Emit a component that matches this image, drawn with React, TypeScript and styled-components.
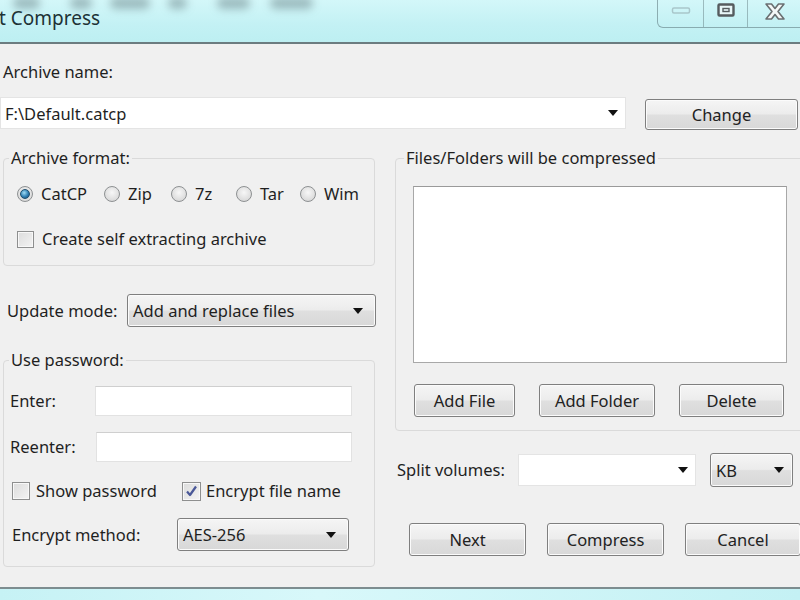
import styled, {createGlobalStyle} from 'styled-components';

const GlobalStyle = createGlobalStyle`
  html, body {
    margin: 0;
    padding: 0;
    background: #c9f3f6;
  }
  body {
    font-family: "Noto Sans", "Liberation Sans", sans-serif;
    font-size: 16.5px;
    color: #1f1f1f;
  }
`;

const Screen = styled.div`
  width: 800px;
  height: 600px;
  overflow: hidden;
  display: flex;
  flex-direction: column;
  background: linear-gradient(90deg, #c6f2f5, #d8f8fa 40%, #c4f1f4);
`;

const TitleBar = styled.div`
  height: 42px;
  flex: none;
  display: flex;
  justify-content: space-between;
  align-items: flex-start;
  background: linear-gradient(180deg, #d3f7f9 0%, #c3f1f4 60%, #bdeff2 100%);
  border-bottom: 2px solid #6c7c80;
  overflow: hidden;
`;

const TitleArea = styled.div`
  display: flex;
  flex-direction: column;
`;

// blurred menu reflections behind the caption
const GhostRow = styled.div`
  height: 14px;
  display: flex;
  align-items: center;
  padding-left: 13px;
  margin-top: -4px;
`;

const GhostBlob = styled.span<{$w: number; $gap: number}>`
  width: ${p => p.$w}px;
  height: 12px;
  margin-right: ${p => p.$gap}px;
  border-radius: 6px;
  background: rgba(80, 105, 110, 0.42);
  filter: blur(4px);
  flex: none;
`;

const Title = styled.div`
  margin-left: -1px;
  margin-top: -4px;
  font-size: 19px;
  line-height: 24px;
  color: #1d3236;
`;

const CaptionGroup = styled.div`
  display: flex;
  height: 27px;
  margin-right: -1px;
  border-left: 1px solid rgba(90, 115, 120, 0.55);
  border-bottom: 1px solid rgba(90, 115, 120, 0.55);
  border-bottom-left-radius: 6px;
`;

const CaptionButton = styled.div<{$w: number; $last?: boolean}>`
  width: ${p => p.$w}px;
  display: flex;
  align-items: flex-start;
  justify-content: center;
  padding-top: 3px;
  box-sizing: border-box;
  border-right: ${p => (p.$last ? 'none' : '1px solid rgba(90, 115, 120, 0.45)')};
`;

const Body = styled.div`
  flex: none;
  height: 545px;
  background: #f0f0f0;
  border-bottom: 2px solid #7d8d90;
  padding-top: 18px;
  box-sizing: border-box;
  width: 812px;
`;

const Text = styled.div<{$pl?: number; $w?: number}>`
  line-height: 20px;
  white-space: nowrap;
  padding-left: ${p => p.$pl ?? 0}px;
  width: ${p => (p.$w ? `${p.$w}px` : 'auto')};
  flex: none;
  box-sizing: border-box;
`;

const NameRow = styled.div`
  width: 798px;
  display: flex;
  align-items: flex-start;
  gap: 19px;
  margin-top: 15px;
`;

const Arrow = styled.span`
  width: 0;
  height: 0;
  border-left: 5px solid transparent;
  border-right: 5px solid transparent;
  border-top: 6px solid #111;
  flex: none;
`;

const ComboEdit = styled.div<{$w?: number; $h?: number}>`
  width: ${p => (p.$w ? `${p.$w}px` : 'auto')};
  flex: ${p => (p.$w ? 'none' : '1')};
  height: ${p => p.$h ?? 32}px;
  box-sizing: border-box;
  background: #fff;
  border: 1px solid #e4e4e4;
  display: flex;
  align-items: center;
  justify-content: space-between;
  padding: 0 7px 0 4px;
`;

const Button = styled.button<{$w: number; $h?: number}>`
  width: ${p => p.$w}px;
  height: ${p => p.$h ?? 33}px;
  flex: none;
  box-sizing: border-box;
  font-family: inherit;
  font-size: 16.5px;
  color: #222;
  border: 1px solid #7f7f7f;
  border-radius: 3px;
  background: linear-gradient(180deg, #f5f5f5 0%, #ececec 48%, #dfdfdf 52%, #d8d8d8 100%);
  box-shadow: inset 0 0 0 1px #fbfbfb;
  padding: 0;
`;

const DropSelect = styled.div<{$w: number; $h?: number}>`
  width: ${p => p.$w}px;
  height: ${p => p.$h ?? 33}px;
  flex: none;
  box-sizing: border-box;
  border: 1px solid #7f7f7f;
  border-radius: 3px;
  background: linear-gradient(180deg, #f5f5f5 0%, #ececec 48%, #dfdfdf 52%, #d8d8d8 100%);
  box-shadow: inset 0 0 0 1px #fbfbfb;
  display: flex;
  align-items: center;
  justify-content: space-between;
  padding: 0 12px 0 5px;
  white-space: nowrap;
`;

const MainGrid = styled.div`
  display: grid;
  grid-template-columns: 377px 411px;
  column-gap: 18px;
  margin-top: 18px;
`;

const Column = styled.div`
  display: flex;
  flex-direction: column;
  align-items: flex-start;
`;

const Group = styled.fieldset<{$w: number; $ml?: number; $mt?: number}>`
  width: ${p => p.$w}px;
  margin: ${p => p.$mt ?? 0}px 0 0 ${p => p.$ml ?? 0}px;
  padding: 0;
  min-width: 0;
  box-sizing: border-box;
  border: 1px solid #dadada;
  border-radius: 4px;
`;

const Legend = styled.legend<{$ml?: number}>`
  margin-left: ${p => p.$ml ?? 5}px;
  padding: 0 2px;
  line-height: 20px;
`;

const GroupInner = styled.div<{$pad: string}>`
  padding: ${p => p.$pad};
  display: flex;
  flex-direction: column;
  align-items: flex-start;
`;

const Row = styled.div<{$mt?: number; $pl?: number}>`
  display: flex;
  align-items: center;
  margin-top: ${p => p.$mt ?? 0}px;
  padding-left: ${p => p.$pl ?? 0}px;
`;

const Choice = styled.div<{$w?: number; $gap?: number}>`
  display: flex;
  align-items: center;
  gap: ${p => p.$gap ?? 8}px;
  width: ${p => (p.$w ? `${p.$w}px` : 'auto')};
  flex: none;
  white-space: nowrap;
  line-height: 20px;
`;

const RadioDot = styled.span<{$on?: boolean}>`
  width: 16px;
  height: 16px;
  box-sizing: border-box;
  border-radius: 50%;
  border: 1px solid #8d9092;
  background: radial-gradient(circle at 50% 40%, #f7f7f7 0%, #dcdcdc 70%, #cfcfcf 100%);
  display: flex;
  align-items: center;
  justify-content: center;
  flex: none;
  &::after {
    content: '';
    display: ${p => (p.$on ? 'block' : 'none')};
    width: 8px;
    height: 8px;
    border-radius: 50%;
    border: 1px solid #1f4f6f;
    background: radial-gradient(circle at 40% 35%, #9fdcf5 0%, #2f7fb3 55%, #15456c 100%);
  }
`;

const CheckBox = styled.span<{$size?: number}>`
  width: ${p => p.$size ?? 17}px;
  height: ${p => p.$size ?? 17}px;
  box-sizing: border-box;
  border: 1px solid #8e8f8f;
  background: linear-gradient(135deg, #dcdcdc, #f3f3f3);
  box-shadow: inset 0 0 0 1px #f8f8f8;
  display: flex;
  align-items: center;
  justify-content: center;
  flex: none;
`;

const TextInput = styled.div<{$w: number}>`
  width: ${p => p.$w}px;
  height: 30px;
  flex: none;
  box-sizing: border-box;
  background: #fff;
  border: 1px solid #e2e2e2;
  border-top-color: #cfcfcf;
`;

const ListBox = styled.div`
  width: 374px;
  height: 177px;
  margin: 18px 0 0 17px;
  box-sizing: border-box;
  background: #fff;
  border: 1px solid #a8a8a8;
  border-top-color: #9a9a9a;
`;

const ButtonRow = styled.div<{$mt: number; $pl: number; $gap: number; $pb?: number}>`
  display: flex;
  gap: ${p => p.$gap}px;
  margin-top: ${p => p.$mt}px;
  padding-left: ${p => p.$pl}px;
  padding-bottom: ${p => p.$pb ?? 0}px;
`;

const Spacer = styled.div<{$w: number}>`
  width: ${p => p.$w}px;
  flex: none;
`;

const Tick = () => (
  <svg width="13" height="13" viewBox="0 0 13 13">
    <path d="M2 6.5 L5 10 L11 1.5" fill="none" stroke="#4a5898" strokeWidth="2.2" strokeLinejoin="round" />
  </svg>
);

export default function App() {
  return (
    <>
      <GlobalStyle />
      <Screen>
        <TitleBar>
          <TitleArea>
            <GhostRow>
              <GhostBlob $w={27} $gap={30} />
              <GhostBlob $w={22} $gap={18} />
              <GhostBlob $w={40} $gap={18} />
              <GhostBlob $w={19} $gap={30} />
              <GhostBlob $w={33} $gap={20} />
              <GhostBlob $w={43} $gap={0} />
            </GhostRow>
            <Title>t Compress</Title>
          </TitleArea>
          <CaptionGroup>
            <CaptionButton $w={46}>
              <svg width="20" height="12" viewBox="0 0 20 12">
                <rect x="1.5" y="5" width="17" height="5" rx="1.5" fill="none" stroke="#a9c6ca" strokeWidth="1.5" />
              </svg>
            </CaptionButton>
            <CaptionButton $w={44}>
              <svg width="18" height="14" viewBox="0 0 18 14">
                <rect x="1.5" y="1.5" width="15" height="11" rx="1" fill="#e8f6f7" stroke="#555b5e" strokeWidth="2.4" />
                <rect x="6" y="5.5" width="6" height="3" fill="none" stroke="#555b5e" strokeWidth="1.4" />
              </svg>
            </CaptionButton>
            <CaptionButton $w={53} $last>
              <svg width="22" height="17" viewBox="0 0 22 17">
                <path d="M2 1 H7.5 L11 5.5 L14.5 1 H20 L14 8.5 L20 16 H14.5 L11 11.5 L7.5 16 H2 L8 8.5 Z" fill="#f4f8f8" stroke="#6a6f71" strokeWidth="1.6" strokeLinejoin="round" />
              </svg>
            </CaptionButton>
          </CaptionGroup>
        </TitleBar>

        <Body>
          <Text $pl={3}>Archive name:</Text>
          <NameRow>
            <ComboEdit>
              <span>F:\Default.catcp</span>
              <Arrow />
            </ComboEdit>
            <Button $w={153} $h={31} style={{marginTop: 2}}>Change</Button>
          </NameRow>

          <MainGrid>
            <Column>
              <Group $w={372} $ml={3}>
                <Legend>Archive format:</Legend>
                <GroupInner $pad="16px 0 16px 13px">
                  <Row>
                    <Choice $w={87}><RadioDot $on />CatCP</Choice>
                    <Choice $w={67}><RadioDot />Zip</Choice>
                    <Choice $w={65}><RadioDot />7z</Choice>
                    <Choice $w={64}><RadioDot />Tar</Choice>
                    <Choice><RadioDot />Wim</Choice>
                  </Row>
                  <Row $mt={25}>
                    <Choice><CheckBox />Create self extracting archive</Choice>
                  </Row>
                </GroupInner>
              </Group>

              <Row $mt={28} $pl={7}>
                <Text $w={120}>Update mode:</Text>
                <DropSelect $w={249}>
                  <span>Add and replace files</span>
                  <Arrow />
                </DropSelect>
              </Row>

              <Group $w={372} $ml={3} $mt={23}>
                <Legend>Use password:</Legend>
                <GroupInner $pad="16px 0 15px 6px">
                  <Row>
                    <Text $w={85}>Enter:</Text>
                    <TextInput $w={257} />
                  </Row>
                  <Row $mt={16}>
                    <Text $w={86}>Reenter:</Text>
                    <TextInput $w={256} />
                  </Row>
                  <Row $mt={19} $pl={2}>
                    <Choice $w={170} $gap={6}><CheckBox $size={18} />Show password</Choice>
                    <Choice $gap={5}>
                      <CheckBox $size={19}><Tick /></CheckBox>Encrypt file name
                    </Choice>
                  </Row>
                  <Row $mt={17} $pl={2}>
                    <Text $w={165}>Encrypt method:</Text>
                    <DropSelect $w={172}>
                      <span>AES-256</span>
                      <Arrow />
                    </DropSelect>
                  </Row>
                </GroupInner>
              </Group>
            </Column>

            <Column>
              <Group $w={411}>
                <Legend $ml={8}>Files/Folders will be compressed</Legend>
                <ListBox />
                <ButtonRow $mt={21} $pl={18} $gap={24} $pb={13}>
                  <Button $w={101}>Add File</Button>
                  <Button $w={116}>Add Folder</Button>
                  <Button $w={105}>Delete</Button>
                </ButtonRow>
              </Group>

              <Row $mt={22} $pl={2}>
                <Text $w={121}>Split volumes:</Text>
                <ComboEdit $w={178}>
                  <span />
                  <Arrow />
                </ComboEdit>
                <Spacer $w={14} />
                <DropSelect $w={83} $h={34} style={{paddingRight: 8}}>
                  <span>KB</span>
                  <Arrow />
                </DropSelect>
              </Row>

              <ButtonRow $mt={36} $pl={14} $gap={21}>
                <Button $w={117}>Next</Button>
                <Button $w={117}>Compress</Button>
                <Button $w={116}>Cancel</Button>
              </ButtonRow>
            </Column>
          </MainGrid>
        </Body>
      </Screen>
    </>
  );
}
